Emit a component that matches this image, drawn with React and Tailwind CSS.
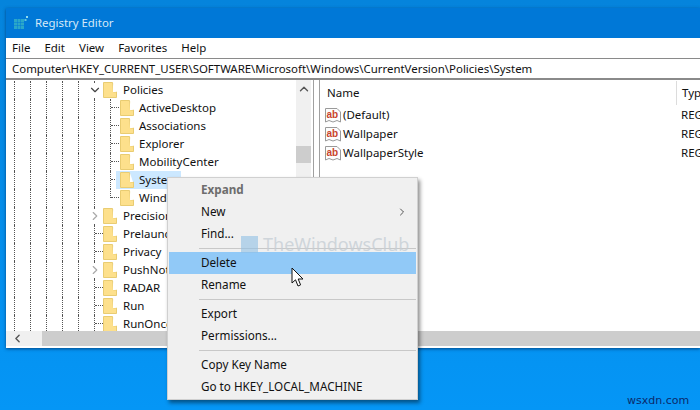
import { ChevronDown, ChevronRight, ChevronLeft, ChevronUp } from "lucide-react";

const font = { fontFamily: '"Noto Sans", sans-serif' };

const treeRows = [
  { label: "Policies", depth: 1, arrow: "down" },
  { label: "ActiveDesktop", depth: 2 },
  { label: "Associations", depth: 2 },
  { label: "Explorer", depth: 2 },
  { label: "MobilityCenter", depth: 2 },
  { label: "System", depth: 2, selected: true },
  { label: "WindowsUpdate", depth: 2, last: true },
  { label: "PrecisionTouchPad", depth: 1, arrow: "right" },
  { label: "PrelaunchKiosk", depth: 1 },
  { label: "Privacy", depth: 1 },
  { label: "PushNotifications", depth: 1, arrow: "right" },
  { label: "RADAR", depth: 1 },
  { label: "Run", depth: 1 },
  { label: "RunOnce", depth: 1 },
];

function Folder() {
  return (
    <svg width="14" height="16" viewBox="0 0 14 16" className="shrink-0">
      <path d="M0.5 0.5H9.5L10.5 10H13.5V15.5H0.5Z" fill="#fde08c" stroke="#e9cc72" />
      <path d="M10 1L13 10H10Z" fill="#ffffff" />
    </svg>
  );
}

function Guides({ count }) {
  return (
    <>
      {Array.from({ length: count }).map((_, i) => (
        <div key={i} className="w-[16px] h-full shrink-0 border-l border-dotted border-[#555]" />
      ))}
    </>
  );
}

function TreeRow({ row }) {
  return (
    <div className="flex h-[18px] items-center text-[11.5px] text-[#111] whitespace-nowrap pl-[8px]">
      <Guides count={5} />
      <div className="relative w-[9px] h-full shrink-0 border-l border-dotted border-[#555]">
        {row.depth === 1 && !row.arrow && (
          <div className="absolute left-0 top-[8px] w-[8px] border-t border-dotted border-[#555]" />
        )}
        {row.arrow === "down" && (
          <ChevronDown size={14} strokeWidth={2} className="absolute -left-[7px] top-[2px] text-[#444] bg-white" />
        )}
        {row.arrow === "right" && (
          <ChevronRight size={14} strokeWidth={2} className="absolute -left-[7px] top-[2px] text-[#aaa] bg-white" />
        )}
      </div>
      {row.depth === 2 ? (
        <>
          <div className={`relative w-[10px] ml-[7px] shrink-0 self-start border-l border-dotted border-[#555] ${row.last ? "h-[9px]" : "h-[18px]"}`}>
            <div className="absolute left-0 top-[8px] w-[8px] border-t border-dotted border-[#555]" />
          </div>
          <div className={`flex items-center h-full ${row.selected ? "relative bg-[#cce8ff] w-[65px] -ml-[4px] pl-[4px]" : ""}`}>
            <Folder />
            <span className="ml-[5px]">{row.label}</span>
          </div>
        </>
      ) : (
        <>
          <Folder />
          <span className="ml-[6px]">{row.label}</span>
        </>
      )}
    </div>
  );
}

function AbIcon() {
  return (
    <svg width="16" height="16" viewBox="0 0 16 16" className="shrink-0">
      <path d="M0.5 1.5H12L15.5 5V15L12 13.5L8 15L4 13.5L0.5 15Z" fill="#fdfdfd" stroke="#9a9a9a" />
      <text x="1.5" y="10.5" fontSize="10" fontWeight="700" fill="#c9442c" style={{ fontFamily: '"Liberation Sans", sans-serif' }}>ab</text>
    </svg>
  );
}

function MenuItem({ label, bold, hot, arrow }) {
  return (
    <div className={`flex h-[22px] items-center justify-between pl-[32px] pr-[8px] mx-[1px] text-[11.7px] ${hot ? "bg-[#91c9f7]" : ""} ${bold ? "font-bold text-[#6d6d6d]" : "text-[#111]"}`}>
      <span>{label}</span>
      {arrow && <ChevronRight size={12} strokeWidth={1.5} className="text-[#222]" />}
    </div>
  );
}

function Separator() {
  return (
    <div className="flex h-[7px] items-center pl-[31px] pr-[1px]">
      <div className="h-px w-full bg-[#c8c8c8]" />
    </div>
  );
}

function RegistryIcon() {
  return (
    <svg width="15" height="15" viewBox="0 0 15 15">
      <g fill="#2aa7c9">
        {[0, 3.5, 7].map((y) =>
          [0, 3.5, 7].map((x) => <rect key={`${x}-${y}`} x={x} y={y + 3} width="3" height="3" />)
        )}
      </g>
      <rect x="10.5" y="3" width="2" height="2" fill="#5cc3dd" />
      <rect x="12" y="0" width="2" height="2" fill="#8fdcef" />
    </svg>
  );
}

export default function App() {
  return (
    <div className="relative w-[700px] h-[410px] overflow-hidden bg-gradient-to-b from-[#0584dc] to-[#0596f6] pt-[8px] pl-[6px]" style={font}>
      {/* window */}
      <div className="flex flex-col h-[340px] bg-white shadow-[0_1px_3px_rgba(0,40,90,0.7)]">
        <div className="flex h-[30px] shrink-0 items-center bg-[#0078d7] pl-[8px] text-[11.4px] text-[#d5e9f8]">
          <RegistryIcon />
          <span className="ml-[6px]">Registry Editor</span>
        </div>

        <div className="flex h-[20px] shrink-0 items-center gap-[14px] pl-[6px] text-[11.5px] text-[#111]">
          <span>File</span>
          <span>Edit</span>
          <span>View</span>
          <span>Favorites</span>
          <span>Help</span>
        </div>

        <div className="flex h-[22px] shrink-0 items-center border-y border-t-[#8a8a8a] border-b-2 border-b-[#8a8a8a] pl-[6px] pt-[1px] text-[11.45px] text-[#111] whitespace-nowrap">
          Computer\HKEY_CURRENT_USER\SOFTWARE\Microsoft\Windows\CurrentVersion\Policies\System
        </div>

        <div className="flex flex-1 min-h-0">
          <div className="w-[290px] shrink-0 overflow-hidden pt-[1px]">
            {treeRows.map((row) => (
              <TreeRow key={row.label} row={row} />
            ))}
          </div>

          <div className="w-[15px] shrink-0 bg-[#f0f0f0] flex flex-col items-center pt-[2px]">
            <ChevronUp size={14} strokeWidth={2.4} className="text-[#555]" />
            <div className="mt-[50px] h-[17px] w-full bg-[#cdcdcd]" />
          </div>

          <div className="w-[7px] shrink-0 border-x border-x-[#a0a0a0] ml-[2px] bg-white" />

          <div className="flex-1 min-w-0 overflow-hidden text-[11.5px] text-[#111] pt-[1px]">
            <div className="flex h-[24px] items-center pl-[7px] whitespace-nowrap">
              <span className="w-[349px] shrink-0">Name</span>
              <div className="h-full w-px bg-[#dcdcdc] mr-[5px] shrink-0" />
              <span>Type</span>
            </div>
            {["(Default)", "Wallpaper", "WallpaperStyle"].map((name) => (
              <div key={name} className="flex h-[19px] items-center pl-[5px] whitespace-nowrap">
                <div className="flex w-[351px] shrink-0 items-center gap-[2px]">
                  <AbIcon />
                  <span>{name}</span>
                </div>
                <span className="ml-[5px]">REG_SZ</span>
              </div>
            ))}
          </div>
        </div>

        <div className="flex h-[15px] shrink-0 mb-[2px]">
          <div className="flex w-[36px] shrink-0 items-center bg-[#f0f0f0] pl-[5px]">
            <ChevronLeft size={13} strokeWidth={2.6} className="text-[#555]" />
          </div>
          <div className="flex-1 bg-[#cdcdcd]" />
        </div>
      </div>

      {/* context menu */}
      <div className="absolute left-[167px] top-[177px] w-[251px] border border-[#d0d0d0] bg-[#f0f0f0] py-[1px] shadow-[2px_3px_4px_rgba(0,0,0,0.45)]">
        <MenuItem label="Expand" bold />
        <MenuItem label="New" arrow />
        <MenuItem label="Find..." />
        <Separator />
        <MenuItem label="Delete" hot />
        <MenuItem label="Rename" />
        <Separator />
        <MenuItem label="Export" />
        <MenuItem label="Permissions..." />
        <Separator />
        <MenuItem label="Copy Key Name" />
        <MenuItem label="Go to HKEY_LOCAL_MACHINE" />
      </div>

      {/* watermark */}
      <div className="absolute left-[241px] top-[235px] flex items-center text-[18px] leading-[18px] text-[#c6ced5]/80 pointer-events-none">
        <div className="h-[17px] w-[17px] bg-[#8fc0e4]/60" />
        <span className="ml-[5px]">TheWindowsClub</span>
      </div>

      {/* cursor */}
      <svg width="14" height="21" viewBox="0 0 14 21" className="absolute left-[291px] top-[267px]">
        <path d="M1 1V16L4.5 12.8L7 19L9.6 17.9L7.2 12H12Z" fill="#fff" stroke="#111" strokeWidth="1" strokeLinejoin="round" />
      </svg>

      <span className="absolute left-[627px] top-[394px] text-[11px] leading-[14px] text-[#0b2a6b]" style={{ fontFamily: '"DejaVu Sans", sans-serif' }}>wsxdn.com</span>
    </div>
  );
}
